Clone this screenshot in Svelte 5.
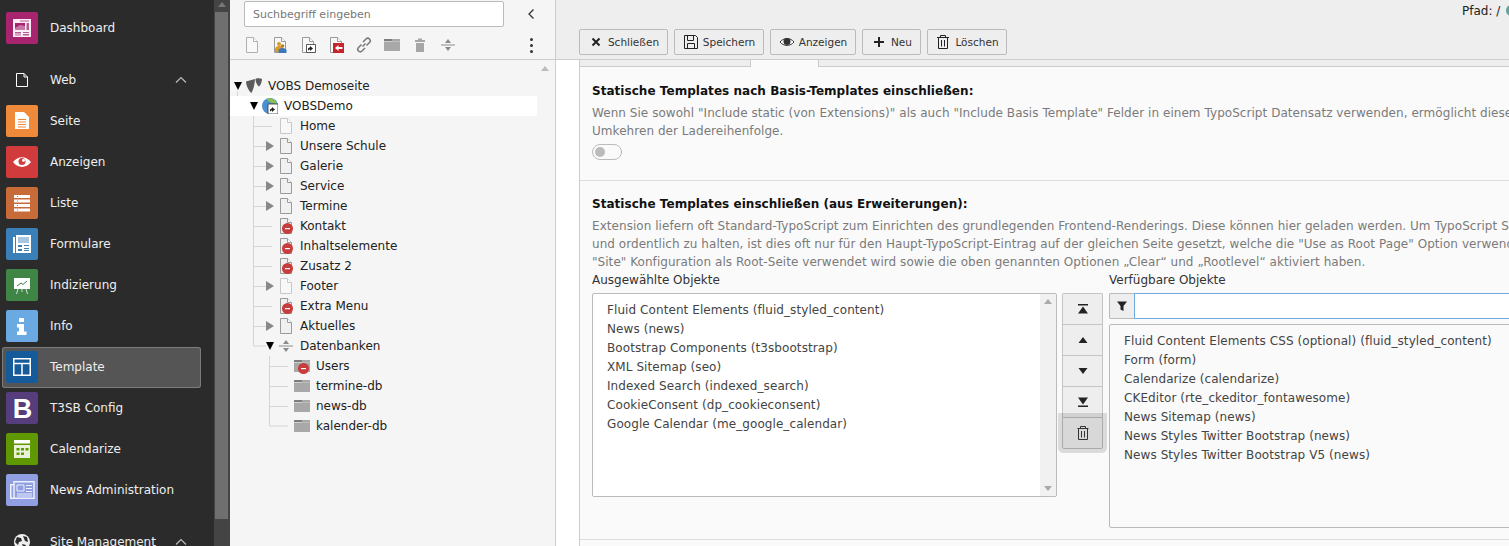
<script>
  const modules = [
    { label: 'Seite', icon: 'seite', color: '#ee8a39' },
    { label: 'Anzeigen', icon: 'eye', color: '#d13b3b' },
    { label: 'Liste', icon: 'liste', color: '#c96b38' },
    { label: 'Formulare', icon: 'form', color: '#3a7fb8' },
    { label: 'Indizierung', icon: 'index', color: '#3f8545' },
    { label: 'Info', icon: 'info', color: '#6ba9e2' },
    { label: 'Template', icon: 'template', color: '#155a9a', active: true },
    { label: 'T3SB Config', icon: 'bootstrap', color: '#563d7c' },
    { label: 'Calendarize', icon: 'calendar', color: '#5f9800' },
    { label: 'News Administration', icon: 'news', color: '#8f9fe2' }
  ];

  const toolbar = ['page-tool', 'users', 'shortcut', 'mount', 'link', 'folder', 'trash', 'divider'];

  const tree = [
    { label: 'VOBS Demoseite', depth: 0, arrow: 'open', icon: 'typo3' },
    { label: 'VOBSDemo', depth: 1, arrow: 'open', icon: 'site', selected: true },
    { label: 'Home', depth: 2, icon: 'page-light' },
    { label: 'Unsere Schule', depth: 2, arrow: 'closed', icon: 'page' },
    { label: 'Galerie', depth: 2, arrow: 'closed', icon: 'page' },
    { label: 'Service', depth: 2, arrow: 'closed', icon: 'page' },
    { label: 'Termine', depth: 2, arrow: 'closed', icon: 'page' },
    { label: 'Kontakt', depth: 2, icon: 'page', hidden: true },
    { label: 'Inhaltselemente', depth: 2, icon: 'page', hidden: true },
    { label: 'Zusatz 2', depth: 2, icon: 'page', hidden: true },
    { label: 'Footer', depth: 2, arrow: 'closed', icon: 'page-light' },
    { label: 'Extra Menu', depth: 2, icon: 'page', hidden: true },
    { label: 'Aktuelles', depth: 2, arrow: 'closed', icon: 'page' },
    { label: 'Datenbanken', depth: 2, arrow: 'open', icon: 'divider' },
    { label: 'Users', depth: 3, icon: 'folder', hidden: true },
    { label: 'termine-db', depth: 3, icon: 'folder' },
    { label: 'news-db', depth: 3, icon: 'folder' },
    { label: 'kalender-db', depth: 3, icon: 'folder' }
  ];

  const selected = [
    'Fluid Content Elements (fluid_styled_content)',
    'News (news)',
    'Bootstrap Components (t3sbootstrap)',
    'XML Sitemap (seo)',
    'Indexed Search (indexed_search)',
    'CookieConsent (dp_cookieconsent)',
    'Google Calendar (me_google_calendar)'
  ];

  const available = [
    'Fluid Content Elements CSS (optional) (fluid_styled_content)',
    'Form (form)',
    'Calendarize (calendarize)',
    'CKEditor (rte_ckeditor_fontawesome)',
    'News Sitemap (news)',
    'News Styles Twitter Bootstrap (news)',
    'News Styles Twitter Bootstrap V5 (news)'
  ];

  const pageStroke = { 'page-light': '#c8c8c8', 'page-tool': '#b0b0b0' };
  const strokeFor = (name) => pageStroke[name] ?? '#9a9a9a';
  const isPage = (name) => ['page', 'page-light', 'page-tool', 'users', 'shortcut', 'mount'].includes(name);
</script>

{#snippet moduleIcon(name)}
  <svg viewBox="0 0 32 32" width="32" height="32">
    {#if name === 'dashboard'}
      <path d="M7 7h18v18H7z" fill="#fbeff6" />
      <path d="M9 11h10v7H9z" fill="#a8246e" />
      <path d="M9 16l5-3 5 1v4H9z" fill="#c678a5" />
      <path d="M14 8.500h9v1h-9zM20.500 11H23v7h-2.500zM9 20h6v1.500H9zM9 22.500h6v1H9zM17 20h6v1h-6zM17 22h6v1.500h-6z" fill="#b85a92" />
    {:else if name === 'seite'}
      <path d="M9 7h9l5 5v12H9z" fill="#fff" />
      <path d="M12 14h8v1h-8zM12 16.500h8v1h-8zM12 19h8v1h-8zM12 21.500h8v1h-8z" fill="#ee8a39" />
    {:else if name === 'eye'}
      <path d="M7 16c5-6.500 13-6.500 18 0c-5 6.500-13 6.500-18 0z" fill="#fff" />
      <circle cx="16" cy="15.500" r="3.500" fill="#d13b3b" />
      <circle cx="17.500" cy="14.200" r="1.500" fill="#fff" />
    {:else if name === 'liste'}
      <path d="M8 8h16v3H8zM8 12.500h16v3H8zM8 17h16v3H8zM8 21.500h16v3H8z" fill="#fff" />
      <path d="M11 9h1v1h-1zM11 13.500h1v1h-1zM11 18h1v1h-1zM11 22.500h1v1h-1z" fill="#c96b38" />
    {:else if name === 'form'}
      <path d="M10 7h15v18H10zM7 9h2v16H7z" fill="#fff" />
      <path d="M12 9h11v6H12z" fill="#a9c6e0" />
      <path d="M12 17h4v2h-4zM12 21h4v2h-4zM18 17h5v1h-5zM18 20h5v1h-5zM18 22h5v1h-5z" fill="#3a7fb8" />
    {:else if name === 'index'}
      <path d="M8 9h16v11H8z" fill="#fff" />
      <path d="M11 17l4-3 2 1.500 4-3.500" fill="none" stroke="#3f8545" />
      <path d="M12 20l-1.500 5M20 20l1.500 5M16 20v3" stroke="#cfe2d0" fill="none" />
    {:else if name === 'info'}
      <path d="M13 8h5v4h-5zM11 14h7v7.500h2.500V25H11v-3.500h2V17.500h-2z" fill="#fff" />
    {:else if name === 'template'}
      <path d="M7.750 7.750h16.500v16.500H7.750zM7.750 12.500h16.500M16 12.500v11.750" fill="none" stroke="#fff" stroke-width="1.500" />
    {:else if name === 'bootstrap'}
      <text x="16.500" y="25.500" class="bs-letter">B</text>
    {:else if name === 'calendar'}
      <path d="M8 7h16v3.500H8z" fill="#fff" />
      <path d="M8 12h16v13H8z" fill="#e9f2d6" />
      <path d="M10.500 15h3v2.500h-3zM15 15h3v2.500h-3zM19.500 15h3v2.500h-3zM10.500 19.500h3V22h-3zM15 19.500h3V22h-3z" fill="#5f9800" />
    {:else if name === 'news'}
      <path d="M8 7.750h20v16.500H8zM4.750 10.750H8v13.500H4.750z" fill="none" stroke="#eef0fb" stroke-width="1.500" />
      <path d="M11 11h7v6h-7z" fill="none" stroke="#eef0fb" />
      <path d="M20 11h6v1h-6zM20 14h6v1h-6zM20 17h6v1h-6zM11 19.500h15v1H11zM11 21.500h15v1H11z" fill="#eef0fb" />
    {/if}
  </svg>
{/snippet}

{#snippet treeIcon(name)}
  <svg viewBox="0 0 16 16" width="16" height="16">
    {#if isPage(name)}
      <path d="M2.500.5h7l4 4v11h-11z" fill={name === 'page' ? '#f0f0f0' : '#f8f8f8'} stroke={strokeFor(name)} />
      <path d="M9.500.5v4h4" fill="#fff" stroke={strokeFor(name)} />
    {/if}
    {#if name === 'users'}
      <circle cx="7" cy="7" r="2" fill="#d99a2b" />
      <path d="M3 15v-3c0-2 2-3 4-3s4 1 4 3v3z" fill="#d99a2b" />
      <circle cx="10.500" cy="9" r="1.800" fill="#b87d20" />
      <path d="M6.500 16v-2.500c0-1.500 2-2.500 4-2.500s4 1 4 2.500V16z" fill="#3f78b8" />
    {:else if name === 'shortcut'}
      <path d="M6.500 7.500h9v8h-9z" fill="#fff" stroke="#333" stroke-width=".8" />
      <path d="M8 14v-2c0-1 1-1.500 2-1.500V9l3 2.500-3 2.500v-1.500c-1 0-1.500.5-2 1.500z" fill="#222" />
    {:else if name === 'mount'}
      <path d="M5 6h11v10H5z" fill="#c8222c" />
      <path d="M7 11l3.500-3v2h4v2h-4v2z" fill="#fff" />
    {:else if name === 'link'}
      <path d="M6.500 9.500l3-3" stroke="#777" stroke-width="1.500" />
      <path d="M7 5l3-3c1-1 2.500-1 3.500 0s1 2.500 0 3.500l-3 3M9 11l-3 3c-1 1-2.500 1-3.500 0s-1-2.500 0-3.500l3-3" fill="none" stroke="#777" stroke-width="1.500" />
    {:else if name === 'folder'}
      <path d="M0 2h8v2H0z" fill="#7d7d7d" />
      <path d="M0 4.500h16V14H0z" fill="#a8a8a8" />
      <path d="M8 2h8v2.500H8z" fill="#a8a8a8" />
    {:else if name === 'trash'}
      <path d="M3 3h10v2H3zM6 1.500h4V3H6z" fill="#a6a6a6" />
      <path d="M4 6h8v9H4z" fill="#a6a6a6" />
    {:else if name === 'divider'}
      <path d="M1 7.500h14v1H1z" fill="#8a8a8a" />
      <path d="M8 2l3 4H5zM8 14l-3-4h6z" fill="#8a8a8a" />
    {:else if name === 'typo3'}
      <path d="M0 3.500L9 1c-.2 5-1.500 10-3.500 14C3 13.500 0 7.500 0 3.500z" fill="#5c5c5c" />
      <path d="M9.500 .8c2-.6 5-.6 6.500.2c0 2.500-1.500 6.500-3 7.500c-1.500-.8-3.500-4-3.500-7.700z" fill="#5c5c5c" />
    {:else if name === 'site'}
      <circle cx="8" cy="8" r="8" fill="#4a8fd0" />
      <path d="M5 1c4-2 9 1 10 5l-5-1c-2-.5-4-2-5-4z" fill="#8dc04a" />
      <path d="M6 6h10v10H6z" fill="#fff" stroke="#333" stroke-width=".8" />
      <path d="M8 14v-2c0-1 1-1.500 2-1.500V9l3 2.500-3 2.500v-1.500c-1 0-1.500.5-2 1.500z" fill="#222" />
    {/if}
  </svg>
{/snippet}

<div class="backend">
  <nav class="sidebar">
    <div class="sidebar-menu">
      <div class="module">
        <span class="module-icon" style="background: #a8246e">{@render moduleIcon('dashboard')}</span>
        <span>Dashboard</span>
      </div>

      <div class="group-head">
        <span class="group-icon">
          <svg viewBox="0 0 16 16" width="16" height="16">
            <path d="M2.500 1.500h7.500l3.500 3.500v9.500h-11zM10 1.500v3.500h3.500" fill="none" stroke="#fff" />
          </svg>
        </span>
        <span>Web</span>
        <svg class="caret" viewBox="0 0 12 8" width="12" height="8">
          <path d="M1 6.500l5-5 5 5" fill="none" stroke="#bbb" stroke-width="1.200" />
        </svg>
      </div>

      <div class="group-items">
        {#each modules as mod}
          <div class="module" class:active={mod.active}>
            <span class="module-icon" style="background: {mod.color}">{@render moduleIcon(mod.icon)}</span>
            <span>{mod.label}</span>
          </div>
        {/each}
      </div>

      <div class="group-head">
        <span class="group-icon">
          <svg viewBox="0 0 16 16" width="16" height="16">
            <circle cx="8" cy="8" r="8" fill="#eee" />
            <path d="M3 3l4 1 1 3-3 1-1 3-3-3zM9 2l4 1 1 5-3-1zM8 10l4 1-2 4z" fill="#2b2b2b" />
          </svg>
        </span>
        <span>Site Management</span>
        <svg class="caret" viewBox="0 0 12 8" width="12" height="8">
          <path d="M1 6.500l5-5 5 5" fill="none" stroke="#bbb" stroke-width="1.200" />
        </svg>
      </div>
    </div>

    <div class="sidebar-scroll">
      <span class="up-arrow"></span>
      <div class="sidebar-thumb"></div>
    </div>
  </nav>

  <aside class="tree-panel">
    <div class="tree-head">
      <div class="search-row">
        <input class="search" type="text" placeholder="Suchbegriff eingeben" />
        <svg class="collapse" viewBox="0 0 8 12" width="8" height="12">
          <path d="M6.500 1.500L2 6l4.500 4.500" fill="none" stroke="#333" stroke-width="1.300" />
        </svg>
      </div>
      <div class="tool-row">
        {#each toolbar as tool}
          <span class="tool">{@render treeIcon(tool)}</span>
        {/each}
        <span class="kebab"><i></i><i></i><i></i></span>
      </div>
    </div>

    <div class="tree-body">
      <svg class="tree-lines" width="325" height="486">
        <path
          d="M237.500 31v15.500H250M253.500 56v230H266M253.500 66.500H272M253.500 86.500H266M253.500 106.500H266M253.500 126.500H266M253.500 146.500H266M253.500 166.500H272M253.500 186.500H272M253.500 206.500H272M253.500 226.500H266M253.500 246.500H272M253.500 266.500H266M269.500 296v70H288M269.500 306.500H288M269.500 326.500H288M269.500 346.500H288"
          transform="translate(-230 0)"
          fill="none"
          stroke="#d4d4d4"
        />
      </svg>
      <div class="tree-scroll-arrow"></div>
      {#each tree as node}
        <div class="node" class:selected={node.selected} style="padding-left: {3 + node.depth * 16}px">
          <span class="expander">
            {#if node.arrow === 'open'}
              <span class="arrow-open"></span>
            {:else if node.arrow === 'closed'}
              <span class="arrow-closed"></span>
            {/if}
          </span>
          <span class="node-icon">
            {@render treeIcon(node.icon)}
            {#if node.hidden}
              <svg class="hidden-badge" viewBox="0 0 11 11" width="11" height="11">
                <circle cx="5.500" cy="5.500" r="5.500" fill="#c83c3c" />
                <path d="M3 5h5v1.200H3z" fill="#fff" />
              </svg>
            {/if}
          </span>
          <span class="node-label">{node.label}</span>
        </div>
      {/each}
    </div>
  </aside>

  <main class="content">
    <header class="docheader">
      <div class="path">Pfad: / <span class="path-site"></span></div>
      <div class="buttons">
        <button class="btn close">
          <svg viewBox="0 0 16 16" width="16" height="16"><path d="M4.500 4.500l7 7M11.500 4.500l-7 7" stroke="#222" stroke-width="2" /></svg>
          Schließen
        </button>
        <button class="btn save">
          <svg viewBox="0 0 16 16" width="16" height="16">
            <path d="M1.500 1.500h11l2 2v11h-13zM4.500 1.500v5h6v-5M4.500 14.500v-5h7v5" fill="none" stroke="#222" />
          </svg>
          Speichern
        </button>
        <button class="btn show">
          <svg viewBox="0 0 16 16" width="16" height="16">
            <path d="M1 8c3.500-4.500 10.500-4.500 14 0c-3.500 4.500-10.500 4.500-14 0z" fill="#fff" stroke="#333" />
            <circle cx="8" cy="7.500" r="3.500" fill="#333" />
          </svg>
          Anzeigen
        </button>
        <button class="btn add">
          <svg viewBox="0 0 16 16" width="16" height="16"><path d="M8 3v10M3 8h10" stroke="#222" stroke-width="2" /></svg>
          Neu
        </button>
        <button class="btn remove">
          <svg viewBox="0 0 16 16" width="16" height="16">
            <path d="M2 3.500h12M5.500 3.500v-2h5v2M3.500 3.500v11h9v-11M6.500 6v6.500M9.500 6v6.500" fill="none" stroke="#222" />
          </svg>
          Löschen
        </button>
      </div>
    </header>

    <div class="page">
      <div class="tabs">
        <div class="tab-spacer"></div>
        <div class="tab-active"></div>
        <div class="tab-rest"></div>
      </div>

      <section class="field first">
        <h4>Statische Templates nach Basis-Templates einschließen:</h4>
        <p>Wenn Sie sowohl "Include static (von Extensions)" als auch "Include Basis Template" Felder in einem TypoScript Datensatz verwenden, ermöglicht diese</p>
        <p>Umkehren der Ladereihenfolge.</p>
        <div class="toggle"><span></span></div>
      </section>

      <section class="field second">
        <h4>Statische Templates einschließen (aus Erweiterungen):</h4>
        <p>Extension liefern oft Standard-TypoScript zum Einrichten des grundlegenden Frontend-Renderings. Diese können hier geladen werden. Um TypoScript Sauber</p>
        <p>und ordentlich zu halten, ist dies oft nur für den Haupt-TypoScript-Eintrag auf der gleichen Seite gesetzt, welche die "Use as Root Page" Option verwendet</p>
        <p>"Site" Konfiguration als Root-Seite verwendet wird sowie die oben genannten Optionen „Clear“ und „Rootlevel“ aktiviert haben.</p>

        <div class="multiselect">
          <div class="column">
            <div class="col-label">Ausgewählte Objekte</div>
            <div class="listbox left">
              <div class="options">
                {#each selected as item}
                  <div class="option">{item}</div>
                {/each}
              </div>
              <div class="list-scroll">
                <span class="sb-up"></span>
                <span class="sb-down"></span>
              </div>
            </div>
          </div>

          <div class="actions">
            <button class="action">
              <svg viewBox="0 0 14 14" width="14" height="14"><path d="M2 2h10v1.500H2zM7 4.500l5 7H2z" fill="#222" /></svg>
            </button>
            <button class="action">
              <svg viewBox="0 0 14 14" width="14" height="14"><path d="M7 4l4.500 6h-9z" fill="#222" /></svg>
            </button>
            <button class="action">
              <svg viewBox="0 0 14 14" width="14" height="14"><path d="M7 10L2.500 4h9z" fill="#222" /></svg>
            </button>
            <button class="action">
              <svg viewBox="0 0 14 14" width="14" height="14"><path d="M2 10.500h10V12H2zM7 9.500l-5-7h10z" fill="#222" /></svg>
            </button>
            <button class="action focused">
              <svg viewBox="0 0 16 16" width="16" height="16">
                <path d="M2.500 3.500h11M5.500 3.500v-2h5v2M3.500 3.500v11h9v-11M6.500 6v6.500M9.500 6v6.500" fill="none" stroke="#333" />
              </svg>
            </button>
          </div>

          <div class="column">
            <div class="col-label">Verfügbare Objekte</div>
            <div class="filter">
              <span class="filter-addon">
                <svg viewBox="0 0 12 12" width="12" height="12"><path d="M1 1.500h10L7.500 6v5l-3-1.500V6z" fill="#222" /></svg>
              </span>
              <input class="filter-input" type="text" />
            </div>
            <div class="listbox right">
              <div class="options">
                {#each available as item}
                  <div class="option">{item}</div>
                {/each}
              </div>
            </div>
          </div>
        </div>
      </section>
    </div>
  </main>
</div>

<style>
  :global(body) {
    margin: 0;
    background: #fff;
  }

  .backend {
    display: flex;
    width: 1509px;
    height: 546px;
    overflow: hidden;
    font-family: 'DejaVu Sans', Verdana, sans-serif;
    font-size: 12px;
    color: #333;
  }

  /* module menu */
  .sidebar {
    flex: 0 0 230px;
    display: flex;
    background: #2b2b2b;
    color: #eee;
  }

  .sidebar-menu {
    flex: 0 0 214px;
    padding-top: 8px;
    box-sizing: border-box;
  }

  .module {
    display: flex;
    align-items: center;
    gap: 12px;
    width: 199px;
    height: 41px;
    margin-left: 2px;
    padding: 0 0 1px 4px;
    box-sizing: border-box;
    border-radius: 3px;
  }

  .module.active {
    background: #555;
    box-shadow: inset 0 0 0 1px #7c7c7c;
  }

  .module-icon {
    display: block;
    width: 32px;
    height: 32px;
    border-radius: 2px;
  }

  .module-icon svg {
    display: block;
  }

  .bs-letter {
    font-family: 'Liberation Sans', Arial, sans-serif;
    font-size: 27px;
    font-weight: 700;
    fill: #fff;
    text-anchor: middle;
  }

  .group-head {
    display: flex;
    align-items: center;
    height: 34px;
    margin-top: 14px;
    padding-left: 14px;
  }

  .group-icon {
    display: block;
    width: 16px;
    height: 16px;
    margin-right: 20px;
  }

  .group-icon svg {
    display: block;
  }

  .caret {
    margin-left: auto;
    margin-right: 27px;
  }

  .group-items {
    margin-top: 4px;
  }

  .sidebar-scroll {
    flex: 0 0 16px;
    position: relative;
    background: #444;
  }

  .up-arrow {
    position: absolute;
    left: 4px;
    top: 2px;
    border: 4px solid transparent;
    border-top-width: 0;
    border-bottom: 5px solid #777;
  }

  .sidebar-thumb {
    width: 13px;
    height: 507px;
    margin: 12px 0 0 1px;
    background: #6f6f6f;
  }

  /* page tree */
  .tree-panel {
    flex: 0 0 325px;
    display: flex;
    flex-direction: column;
    background: #f5f5f5;
    border-right: 1px solid #ccc;
  }

  .tree-head {
    height: 60px;
    box-sizing: border-box;
    padding: 1px 0 0 14px;
    border-bottom: 1px solid #ccc;
  }

  .search-row {
    display: flex;
    align-items: center;
  }

  .search {
    width: 260px;
    height: 26px;
    box-sizing: border-box;
    padding: 0 8px;
    border: 1px solid #bbb;
    border-radius: 2px;
    background: #fff;
    font: inherit;
    font-size: 11px;
  }

  .search::placeholder {
    color: #777;
    opacity: 1;
  }

  .collapse {
    margin-left: 23px;
  }

  .tool-row {
    display: flex;
    align-items: center;
    height: 16px;
    margin-top: 10px;
    gap: 12px;
  }

  .tool {
    display: block;
    width: 16px;
    height: 16px;
  }

  .tool svg {
    display: block;
  }

  .kebab {
    display: flex;
    flex-direction: column;
    gap: 3px;
    margin-left: 62px;
  }

  .kebab i {
    display: block;
    width: 3px;
    height: 3px;
    border-radius: 50%;
    background: #333;
  }

  .tree-body {
    position: relative;
    flex: 1;
    padding-top: 16px;
    overflow: hidden;
  }

  .tree-lines {
    position: absolute;
    left: 0;
    top: 0;
  }

  .tree-scroll-arrow {
    position: absolute;
    left: 311px;
    top: 6px;
    border: 4px solid transparent;
    border-top-width: 0;
    border-bottom: 5px solid #bbb;
  }

  .node {
    position: relative;
    display: flex;
    align-items: center;
    width: 307px;
    height: 20px;
    box-sizing: border-box;
    color: #222;
  }

  .node.selected {
    background: #fff;
  }

  .expander {
    flex: 0 0 13px;
    display: flex;
    align-items: center;
    padding-left: 1px;
    box-sizing: border-box;
  }

  .arrow-open {
    border: 4.5px solid transparent;
    border-bottom-width: 0;
    border-top: 8px solid #000;
  }

  .arrow-closed {
    border: 5px solid transparent;
    border-right-width: 0;
    border-left: 8px solid #888;
  }

  .node-icon {
    position: relative;
    flex: 0 0 16px;
    height: 16px;
    margin-right: 6px;
  }

  .node-icon svg {
    display: block;
  }

  .node-icon .hidden-badge {
    position: absolute;
    right: 1px;
    bottom: 0;
  }

  /* main content */
  .content {
    flex: 1;
    min-width: 0;
    display: flex;
    flex-direction: column;
    background: #fff;
  }

  .docheader {
    position: relative;
    height: 60px;
    box-sizing: border-box;
    padding: 29px 0 0 23px;
    background: #eee;
    border-bottom: 1px solid #ccc;
  }

  .path {
    position: absolute;
    left: 906px;
    top: 4px;
    color: #222;
    white-space: nowrap;
  }

  .path-site {
    display: inline-block;
    width: 11px;
    height: 11px;
    margin-left: 2px;
    border-radius: 50%;
    background: #5fa39a;
    vertical-align: -1px;
  }

  .buttons {
    display: flex;
    gap: 6px;
  }

  .btn {
    display: flex;
    align-items: center;
    justify-content: center;
    gap: 4px;
    height: 26px;
    box-sizing: border-box;
    padding: 0;
    border: 1px solid #bbb;
    border-radius: 2px;
    background: #eee;
    color: #333;
    font: inherit;
    font-size: 10.5px;
  }

  .btn.close { width: 89px; }
  .btn.save { width: 90px; }
  .btn.show { width: 86px; }
  .btn.add { width: 59px; }
  .btn.remove { width: 80px; }

  .page {
    flex: 1;
    min-height: 0;
    margin-left: 23px;
    background: #fafafa;
    border-left: 1px solid #ccc;
    overflow: hidden;
  }

  .tabs {
    display: flex;
    height: 7px;
    background: #eee;
  }

  .tab-spacer {
    width: 170px;
    border-bottom: 1px solid #ccc;
  }

  .tab-active {
    width: 67px;
    background: #fafafa;
    border: 1px solid #ccc;
    border-width: 0 1px;
  }

  .tab-rest {
    flex: 1;
    border-bottom: 1px solid #ccc;
  }

  .field {
    padding-left: 12px;
    border-bottom: 1px solid #ddd;
    white-space: nowrap;
    overflow: hidden;
  }

  .field.first {
    height: 114px;
    box-sizing: border-box;
    padding-top: 15px;
  }

  .field.second {
    height: 359px;
    box-sizing: border-box;
    padding-top: 14px;
  }

  h4 {
    margin: 0 0 4px;
    font-size: 12px;
    line-height: 18px;
    font-weight: 700;
    letter-spacing: 0.04px;
    color: #111;
  }

  p {
    margin: 0;
    font-size: 12px;
    line-height: 18px;
    letter-spacing: 0.05px;
    color: #7a7a7a;
  }

  .toggle {
    width: 30px;
    height: 16px;
    margin-top: 4px;
    box-sizing: border-box;
    border: 1px solid #bbb;
    border-radius: 8px;
    background: #fafafa;
  }

  .toggle span {
    display: block;
    width: 10px;
    height: 10px;
    margin: 2px 0 0 2px;
    border-radius: 50%;
    background: #bbb;
  }

  .multiselect {
    display: flex;
    align-items: flex-start;
    margin-top: 1px;
  }

  .column {
    flex: 0 0 465px;
  }

  .col-label {
    height: 21px;
    line-height: 16px;
    color: #333;
  }

  .listbox {
    display: flex;
    box-sizing: border-box;
    border: 1px solid #bbb;
    border-radius: 2px;
    background: #fff;
  }

  .listbox.left {
    height: 204px;
  }

  .listbox.right {
    height: 204px;
    margin-top: 5px;
    background: #fafafa;
    width: 500px;
  }

  .options {
    flex: 1;
    padding: 7px 14px;
  }

  .option {
    height: 19px;
    line-height: 19px;
    letter-spacing: 0.08px;
    color: #444;
  }

  .list-scroll {
    flex: 0 0 16px;
    display: flex;
    flex-direction: column;
    justify-content: space-between;
    align-items: center;
    padding: 5px 0;
    box-sizing: border-box;
    background: #f1f1f1;
  }

  .sb-up {
    border: 4px solid transparent;
    border-top-width: 0;
    border-bottom: 5px solid #aaa;
  }

  .sb-down {
    border: 4px solid transparent;
    border-bottom-width: 0;
    border-top: 5px solid #aaa;
  }

  .actions {
    flex: 0 0 41px;
    margin: 21px 6px 0 5px;
    display: flex;
    flex-direction: column;
  }

  .action {
    display: flex;
    align-items: center;
    justify-content: center;
    height: 31px;
    padding: 0;
    box-sizing: border-box;
    background: #eee;
    border: 1px solid #c4c4c4;
    border-bottom-width: 0;
  }

  .action:first-child {
    border-radius: 2px 2px 0 0;
  }

  .action.focused {
    height: 32px;
    background: #d8d8d8;
    border: 1px solid #aaa;
    border-radius: 0 0 2px 2px;
    box-shadow: 0 0 0 4px rgba(0, 0, 0, 0.12);
  }

  .filter {
    display: flex;
    width: 500px;
    height: 26px;
  }

  .filter-addon {
    display: flex;
    align-items: center;
    justify-content: center;
    width: 25px;
    box-sizing: border-box;
    background: #eee;
    border: 1px solid #bbb;
    border-right-width: 0;
    border-radius: 2px 0 0 2px;
  }

  .filter-input {
    flex: 1;
    box-sizing: border-box;
    border: 1px solid #6daae0;
    background: #fff;
  }
</style>
